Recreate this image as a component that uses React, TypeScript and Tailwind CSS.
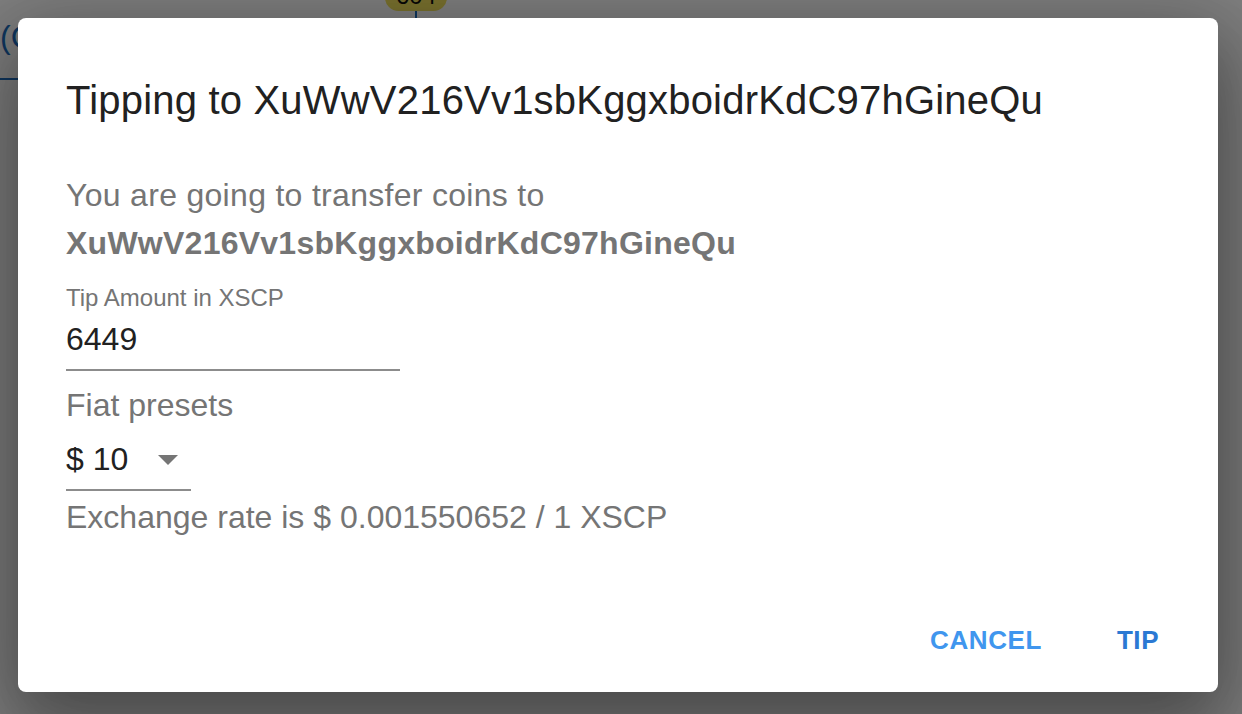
import React from "react";

export default function App() {
  return (
    <div
      className="relative w-[1242px] h-[714px] overflow-hidden bg-white"
      style={{ fontFamily: '"Liberation Sans", Arial, sans-serif' }}
    >
      {/* underlying page */}
      <div className="flex flex-col">
        <div className="flex">
          <div className="w-[385px]" />
          <div className="flex flex-col items-center">
            <div className="-mt-[16px] h-[27px] w-[62px] rounded-full bg-[#f2e25e] flex items-end justify-center text-[24px] leading-[24px] text-[#111] pb-[3px]">
              604
            </div>
            <div className="w-[2px] h-[20px] bg-[#1f6fc0]" />
          </div>
        </div>
        <div className="-mt-[14px] w-[60px] border-b-2 border-[#1f6fc0] pb-[21px] text-[32px] leading-[40px] text-[#1f6fc0]">
          (CSCP)
        </div>
      </div>

      {/* backdrop */}
      <div className="absolute inset-0 bg-[rgba(0,0,0,0.5)]" />

      {/* dialog */}
      <div className="absolute inset-0 flex items-start pl-[18px] pt-[18px]">
        <div className="flex h-[674px] w-[1200px] flex-col rounded-[8px] bg-white shadow-[0_22px_70px_6px_rgba(0,0,0,0.25),0_48px_76px_6px_rgba(0,0,0,0.14),0_18px_92px_16px_rgba(0,0,0,0.12)]">
          <div className="px-[48px] pt-[58px]">
            <h2 className="text-[40px] leading-[48px] font-medium tracking-[0.2px] text-[#212121]">
              Tipping to XuWwV216Vv1sbKggxboidrKdC97hGineQu
            </h2>
          </div>
          <div className="flex flex-col px-[48px] pt-[47px]">
            <p className="text-[32px] leading-[48px] tracking-[0.3px] text-[#757575]">
              You are going to transfer coins to
              <br />
              <span className="font-bold tracking-[0.25px]">XuWwV216Vv1sbKggxboidrKdC97hGineQu</span>
            </p>
            <div className="mt-[19px] text-[24px] leading-[24px] text-[#757575]">
              Tip Amount in XSCP
            </div>
            <div className="mt-[9px] w-[334px] border-b-2 border-[#8c8c8c] pb-[10px] text-[32px] leading-[40px] text-[#212121]">
              6449
            </div>
            <div className="mt-[14px] text-[32px] leading-[40px] text-[#757575]">
              Fiat presets
            </div>
            <div className="mt-[14px] flex w-[125px] flex-nowrap items-center border-b-2 border-[#8c8c8c] pb-[10px]">
              <span className="shrink-0 whitespace-nowrap text-[32px] leading-[40px] text-[#212121]">$ 10</span>
              <svg
                width="48"
                height="48"
                viewBox="0 0 24 24"
                className="ml-[16px] -my-[4px] -mr-[4px] shrink-0"
              >
                <path d="M7 10l5 5 5-5z" fill="#757575" />
              </svg>
            </div>
            <div className="mt-[6px] text-[32px] leading-[40px] text-[#757575]">
              Exchange rate is $ 0.001550652 / 1 XSCP
            </div>
          </div>
          <div className="mt-auto flex justify-end gap-[16px] pb-[32px] pr-[16px]">
            <button className="min-w-[128px] px-[16px] text-[26px] leading-[40px] font-bold tracking-[0.6px] text-[#4096ee]">
              CANCEL
            </button>
            <button className="min-w-[128px] px-[16px] text-[26px] leading-[40px] font-bold tracking-[0.6px] text-[#2b79d3]">
              TIP
            </button>
          </div>
        </div>
      </div>
    </div>
  );
}
